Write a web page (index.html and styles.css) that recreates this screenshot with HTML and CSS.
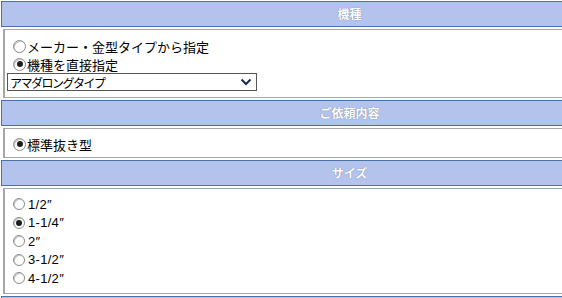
FILE: index.html
```html
<!DOCTYPE html>
<html lang="ja">
<head>
  <meta charset="UTF-8" />
  <title>金型選択</title>
  <link rel="stylesheet" href="styles.css">
</head>
<body>

  <div class="form">

    <div class="head">機種</div>
    <div class="box box-model">
      <label class="row"><input type="radio" name="mode"> メーカー・金型タイプから指定</label>
      <label class="row"><input type="radio" name="mode" checked> 機種を直接指定</label>
      <div class="select">
        <span>アマダロングタイプ</span>
        <svg width="12" height="8" viewBox="0 0 12 8">
          <path d="M1.5 1.5 L6 6 L10.5 1.5" fill="none" stroke="#1c2a4a" stroke-width="2"/>
        </svg>
      </div>
    </div>

    <div class="head">ご依頼内容</div>
    <div class="box box-order">
      <label class="row"><input type="radio" name="order" checked> 標準抜き型</label>
    </div>

    <div class="head">サイズ</div>
    <div class="box box-size">
      <label class="row size"><input type="radio" name="size">1/2″</label>
      <label class="row size"><input type="radio" name="size" checked>1-1/4″</label>
      <label class="row size"><input type="radio" name="size">2″</label>
      <label class="row size"><input type="radio" name="size">3-1/2″</label>
      <label class="row size"><input type="radio" name="size">4-1/2″</label>
    </div>

    <div class="head head-next"></div>

  </div>

</body>
</html>
```

FILE: styles.css
```css
* {
  margin: 0;
  padding: 0;
  box-sizing: border-box;
}

body {
  background: #fff;
  color: #000;
  font-family: "Noto Sans CJK JP", "Liberation Sans", sans-serif;
  font-size: 13px;
  overflow: hidden;
}

.form {
  width: 697px;
  margin: 1px 0 0 1px;
}

/* section title bars */
.head {
  height: 26px;
  margin-bottom: 2px;
  border: 1px solid #4a72a8;
  background: #b3c3ec;
  color: #fff;
  font-size: 12px;
  font-weight: bold;
  line-height: 24px;
  text-align: center;
  text-shadow: 0 0 1px #5a6a90;
}

.head-next {
  height: 4px;
  border-bottom: 0;
}

/* content boxes */
.box {
  margin: 0 0 2px 2px;
  border: 1px solid #a3a8a3;
  border-left-width: 2px;
  padding-left: 8px;
}

.box-model {
  padding-top: 7px;
  padding-bottom: 6px;
  padding-left: 6px;
}

.box-order {
  padding-top: 6px;
  padding-bottom: 4px;
  padding-left: 6px;
}

.box-size {
  padding-top: 6px;
  padding-bottom: 5px;
}

.row {
  display: flex;
  align-items: center;
  height: 18px;
  padding-left: 2px;
  white-space: nowrap;
}

.row.size {
  height: 18.5px;
  padding-left: 0;
  font-family: "Liberation Sans", sans-serif;
  font-size: 13px;
  letter-spacing: 0.3px;
}

/* radios drawn by hand */
input[type="radio"] {
  appearance: none;
  width: 13px;
  height: 13px;
  margin-right: 1px;
  border: 1px solid #8a8a8a;
  border-radius: 50%;
  background: #fff;
  box-shadow: inset 1px 1px 0 #c8c8c8;
  display: grid;
  place-items: center;
  flex: none;
}

input[type="radio"]:checked::after {
  content: "";
  width: 6px;
  height: 6px;
  border-radius: 50%;
  background: #1e1e1e;
}

.row.size input[type="radio"] {
  width: 12px;
  height: 12px;
  margin-right: 3px;
}

/* select */
.select {
  display: flex;
  align-items: center;
  justify-content: space-between;
  width: 250px;
  height: 18px;
  margin-left: -4px;
  border: 1px solid #555;
  padding: 0 4px 0 2px;
  font-size: 12px;
  letter-spacing: -1.5px;
}
```
